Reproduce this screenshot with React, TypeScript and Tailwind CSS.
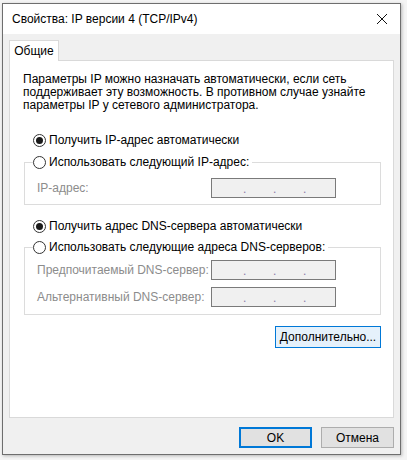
import React from 'react'

const font = { fontFamily: '"Liberation Sans", Arial, sans-serif' }

function Radio({ checked, label }: { checked?: boolean; label: string }) {
  return (
    <span className="flex items-center h-[16px] bg-white">
      <span className="w-[13px] h-[13px] rounded-full border border-[#333333] bg-white flex items-center justify-center">
        {checked && <span className="w-[7px] h-[7px] rounded-full bg-[#1a1a1a]" />}
      </span>
      <span className="ml-[3px] pr-[3px] text-[12px] leading-[16px] text-black whitespace-nowrap">{label}</span>
    </span>
  )
}

function IpBox() {
  return (
    <div className="w-[125px] h-[20px] border border-[#7a7a7a] bg-[#f0f0f0] flex items-end pb-[1px] pl-[31px] text-[12px] leading-[14px] text-[#8a78a8]">
      <span className="w-[30px]">.</span>
      <span className="w-[30px]">.</span>
      <span className="w-[30px]">.</span>
    </div>
  )
}

function Row({ label }: { label: string }) {
  return (
    <div className="flex items-center">
      <span className="w-[174px] text-[12px] leading-[16px] text-[#8c8c8c] whitespace-nowrap">{label}</span>
      <IpBox />
    </div>
  )
}

export default function App() {
  return (
    <div className="w-[407px] h-[460px] bg-[#f4f4f4] pt-[3px] pl-[2px] overflow-hidden" style={font}>
      <div className="w-[399px] h-[452px] border border-[#6e6e6e] bg-[#f0f0f0] flex flex-col shadow-[1px_1px_3px_rgba(0,0,0,0.25)]">
        {/* title bar */}
        <div className="h-[30px] bg-white flex items-center justify-between pl-[9px] pr-[9px]">
          <span className="text-[12px] text-black">Свойства: IP версии 4 (TCP/IPv4)</span>
          <svg width="12" height="12" viewBox="0 0 12 12" className="mr-[3px]">
            <path d="M1 1 L11 11 M11 1 L1 11" stroke="#111" strokeWidth="1" fill="none" />
          </svg>
        </div>

        <div className="flex flex-col px-[6px] pt-[6px]">
          {/* tab */}
          <div className="relative z-10 -mb-px w-[50px] h-[21px] bg-white border border-b-0 border-[#d9d9d9] flex items-center justify-center text-[12px] text-black">
            Общие
          </div>

          {/* tab panel */}
          <div className="h-[358px] bg-white border border-[#d9d9d9] flex flex-col">
            <p className="mt-[12px] pl-[13px] text-[12px] leading-[13px] text-black whitespace-nowrap">
              Параметры IP можно назначать автоматически, если сеть
              <br />
              поддерживает эту возможность. В противном случае узнайте
              <br />
              параметры IP у сетевого администратора.
            </p>

            <div className="mt-[20px] pl-[23px]">
              <Radio checked label="Получить IP-адрес автоматически" />
            </div>

            <fieldset className="mt-[6px] ml-[14px] mr-[12px] border border-[#dcdcdc] pl-[8px] pb-[6px]">
              <legend className="px-0">
                <Radio label="Использовать следующий IP-адрес:" />
              </legend>
              <div className="mt-[8px] pl-[4px]">
                <Row label="IP-адрес:" />
              </div>
            </fieldset>

            <div className="mt-[13px] pl-[23px]">
              <Radio checked label="Получить адрес DNS-сервера автоматически" />
            </div>

            <fieldset className="mt-[5px] ml-[14px] mr-[12px] border border-[#dcdcdc] pl-[8px] pb-[7px]">
              <legend className="px-0">
                <Radio label="Использовать следующие адреса DNS-серверов:" />
              </legend>
              <div className="mt-[5px] pl-[4px] flex flex-col gap-[7px]">
                <Row label="Предпочитаемый DNS-сервер:" />
                <Row label="Альтернативный DNS-сервер:" />
              </div>
            </fieldset>

            <div className="mt-[11px] mr-[12px] flex justify-end">
              <button className="w-[106px] h-[22px] border border-[#0078d7] bg-[#e5f1fb] text-[12px] text-black">
                Дополнительно...
              </button>
            </div>
          </div>

          {/* dialog buttons */}
          <div className="mt-[9px] flex justify-end gap-[9px]">
            <button className="w-[73px] h-[21px] border-2 border-[#0078d7] bg-[#e1e1e1] text-[12px] text-black">
              OK
            </button>
            <button className="w-[73px] h-[21px] border border-[#adadad] bg-[#e1e1e1] text-[12px] text-black">
              Отмена
            </button>
          </div>
        </div>
      </div>
    </div>
  )
}
